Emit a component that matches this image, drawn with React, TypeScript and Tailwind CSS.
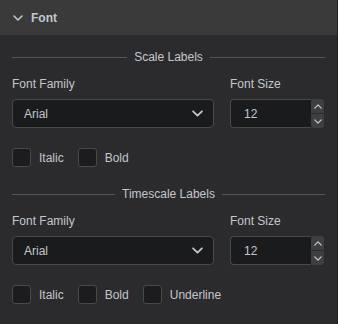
import { useState } from "react";

function Chevron({ dir = "down", className = "" }: { dir?: "up" | "down"; className?: string }) {
  return (
    <svg viewBox="0 0 10 6" className={className} fill="none" stroke="currentColor" strokeWidth="1.6" strokeLinecap="round" strokeLinejoin="round">
      {dir === "down" ? <path d="M1 1l4 4 4-4" /> : <path d="M1 5l4-4 4 4" />}
    </svg>
  );
}

function Divider({ label }: { label: string }) {
  return (
    <div className="flex items-center gap-[7px] h-[14px]">
      <div className="flex-1 h-px bg-[#555658]" />
      <span className="text-[12px] leading-[14px] text-[#c3c7cd]">{label}</span>
      <div className="flex-1 h-px bg-[#555658]" />
    </div>
  );
}

function Check({ label }: { label: string }) {
  const [on, setOn] = useState(false);
  return (
    <label className="flex items-center gap-[8px] cursor-pointer" onClick={() => setOn(!on)}>
      <span className="w-[19px] h-[19px] rounded-[3px] border border-[#48494b] bg-[#1c1c1e]" />
      <span className="text-[12px] leading-[14px] text-[#c3c7cd]">{label}</span>
    </label>
  );
}

function FontRow() {
  return (
    <div className="grid grid-cols-[202px_1fr] gap-x-[16px] mt-[13px]">
      <div className="text-[12px] leading-[14px] text-[#c3c7cd]">Font Family</div>
      <div className="text-[12px] leading-[14px] text-[#c3c7cd]">Font Size</div>
      <div className="mt-[8px] h-[29px] rounded-[4px] border border-[#48494b] bg-[#1a1b1d] flex items-center justify-between pl-[11px] pr-[10px]">
        <span className="text-[12px] text-[#c3c7cd]">Arial</span>
        <Chevron className="w-[11px] h-[7px] text-[#c3c7cd]" />
      </div>
      <div className="mt-[8px] h-[29px] flex">
        <div className="w-[81px] h-full rounded-l-[4px] border border-r-0 border-[#48494b] bg-[#1a1b1d] flex items-center pl-[13px]">
          <span className="text-[12px] text-[#c3c7cd]">12</span>
        </div>
        <div className="w-[13px] flex flex-col gap-px">
          <div className="flex-1 rounded-t-[3px] bg-[#3e3f41] flex items-center justify-center">
            <Chevron dir="up" className="w-[8px] h-[5px] text-[#c3c7cd]" />
          </div>
          <div className="flex-1 rounded-b-[3px] bg-[#3e3f41] flex items-center justify-center">
            <Chevron className="w-[8px] h-[5px] text-[#c3c7cd]" />
          </div>
        </div>
      </div>
    </div>
  );
}

export default function App() {
  return (
    <div className="w-[338px] h-[324px] bg-[#2b2b2d] border-r border-[#1f1f21] font-['Liberation_Sans',Arial,sans-serif]">
      <div className="h-[35px] bg-[#3a3a3b] flex items-center pl-[13px] gap-[8px]">
        <Chevron className="w-[10px] h-[6px] text-[#c3c7cd]" />
        <span className="text-[12px] font-bold text-[#c3c7cd]">Font</span>
      </div>
      <div className="px-[12px] pt-[15px]">
        <Divider label="Scale Labels" />
        <FontRow />
        <div className="flex items-center gap-[14px] mt-[20px]">
          <Check label="Italic" />
          <Check label="Bold" />
        </div>
        <div className="mt-[20px]">
          <Divider label="Timescale Labels" />
        </div>
        <FontRow />
        <div className="flex items-center gap-[14px] mt-[20px]">
          <Check label="Italic" />
          <Check label="Bold" />
          <Check label="Underline" />
        </div>
      </div>
    </div>
  );
}
